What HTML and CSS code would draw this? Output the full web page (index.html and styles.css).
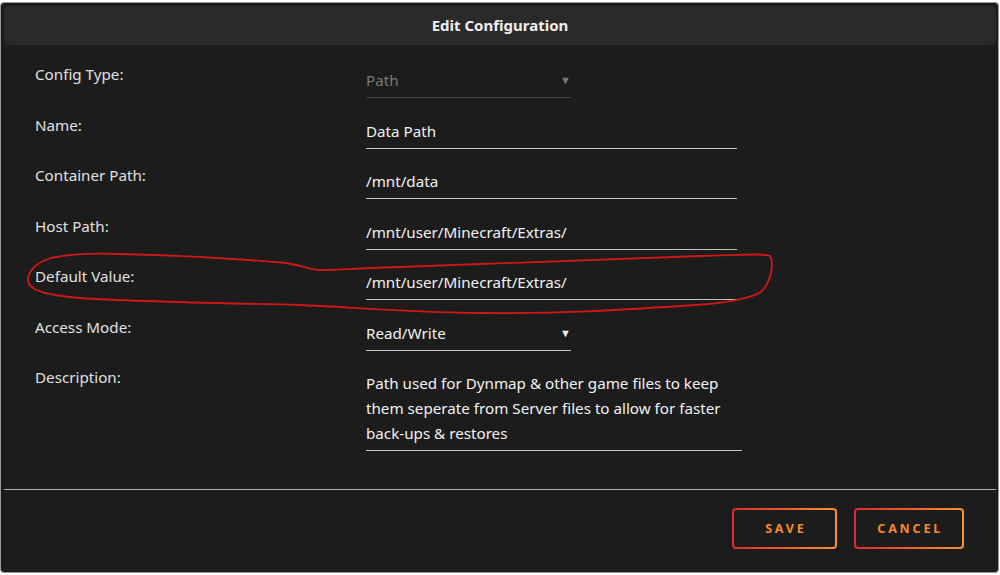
FILE: index.html
```html
<!DOCTYPE html>
<html lang="en">
<head>
    <meta charset="utf-8" />
    <title>Edit Configuration</title>
    <link rel="stylesheet" href="styles.css">
</head>
<body>
    <div id="dialog">
        <div id="title_bar">Edit Configuration</div>
        <div id="config_form">
            <div class="label">Config Type:</div>
            <div class="field select disabled" style="width:205px">Path<span class="arrow">&#9660;</span></div>

            <div class="label">Name:</div>
            <div class="field" style="width:371px">Data Path</div>

            <div class="label">Container Path:</div>
            <div class="field" style="width:371px">/mnt/data</div>

            <div class="label">Host Path:</div>
            <div class="field" style="width:371px">/mnt/user/Minecraft/Extras/</div>

            <div class="label">Default Value:</div>
            <div class="field" style="width:371px">/mnt/user/Minecraft/Extras/</div>

            <div class="label">Access Mode:</div>
            <div class="field select" style="width:205px">Read/Write<span class="arrow">&#9660;</span></div>

            <div class="label">Description:</div>
            <div class="field area" style="width:376px">Path used for Dynmap &amp; other game files to keep<br />them seperate from Server files to allow for faster<br />back-ups &amp; restores</div>
        </div>
        <div id="separator"></div>
        <div id="buttons">
            <div class="button">SAVE</div>
            <div class="button">CANCEL</div>
        </div>
    </div>
    <!-- hand drawn marker round the default value row -->
    <svg id="marker" width="1000" height="575" viewBox="0 0 1000 575">
        <path d="M 51 258 C 70 254, 90 253, 120 254 C 170 255, 230 258, 286 263 C 300 265, 308 269, 318 270 C 340 270, 360 268, 400 267 C 500 264, 600 260, 700 256 C 740 255, 765 253, 770 256 C 774 262, 772 280, 762 291 C 750 300, 720 304, 680 306 C 620 310, 560 314, 480 313 C 400 312, 350 307, 300 305 C 220 303, 140 302, 80 298 C 45 295, 28 290, 28 280 C 28 270, 38 262, 51 258"
              fill="none" stroke="#d01818" stroke-width="1.8" stroke-linecap="round" />
    </svg>
</body>
</html>
```

FILE: styles.css
```css
html, body {
    margin: 0;
    padding: 0;
    background: #fff;
}
body {
    position: relative;
    width: 1000px;
    height: 575px;
    overflow: hidden;
    font-family: "Noto Sans", "Open Sans", sans-serif;
    font-size: 15.2px;
    color: #e2e2e2;
}
#dialog {
    box-sizing: border-box;
    margin-top: 2px;
    width: 999px;
    height: 571px;
    padding: 3px 2px 0 3px;
    background: #1c1c1c;
    border: 1px solid #999;
    border-radius: 4px;
}
#title_bar {
    height: 39px;
    line-height: 39px;
    background: #2a2a2a;
    border-radius: 5px;
    text-align: center;
    font-size: 15px;
    font-weight: bold;
    color: #eee;
}
#config_form {
    display: grid;
    grid-template-columns: 331px 1fr;
    grid-template-rows: repeat(6, 50.5px) auto;
    padding: 19px 0 0 31px;
}
.label {
    line-height: 20px;
    color: #e0e0e0;
}
.field {
    position: relative;
    box-sizing: border-box;
    align-self: start;
    margin-top: 6px;
    line-height: 20px;
    padding-bottom: 7px;
    border-bottom: 1px solid #c4c4c4;
    color: #f2f2f2;
    white-space: nowrap;
}
.field.disabled {
    color: #7a7a7a;
    border-bottom-color: #444;
}
.field .arrow {
    position: absolute;
    right: 0;
    top: 0;
    font-size: 11px;
    color: #f2f2f2;
}
.field.disabled .arrow {
    color: #7a7a7a;
}
.field.area {
    margin-top: 3.5px;
    line-height: 25px;
    padding-bottom: 4px;
}
#separator {
    height: 1px;
    margin-top: 38px;
    background: #b0b0b0;
}
#buttons {
    display: flex;
    justify-content: flex-end;
    gap: 17px;
    margin-top: 18px;
    padding-right: 32px;
}
.button {
    box-sizing: border-box;
    min-width: 105px;
    height: 41px;
    line-height: 37px;
    padding: 0 19px 0 21px;
    text-align: center;
    font-size: 12.5px;
    font-weight: bold;
    letter-spacing: 2.8px;
    color: #f7892b;
    border: 2px solid transparent;
    border-radius: 4px;
    background: linear-gradient(#1c1c1c, #1c1c1c) padding-box,
                linear-gradient(90deg, #e12a2a, #ff8f2e) border-box;
}
#marker {
    position: absolute;
    left: 0;
    top: 0;
    pointer-events: none;
}
```
